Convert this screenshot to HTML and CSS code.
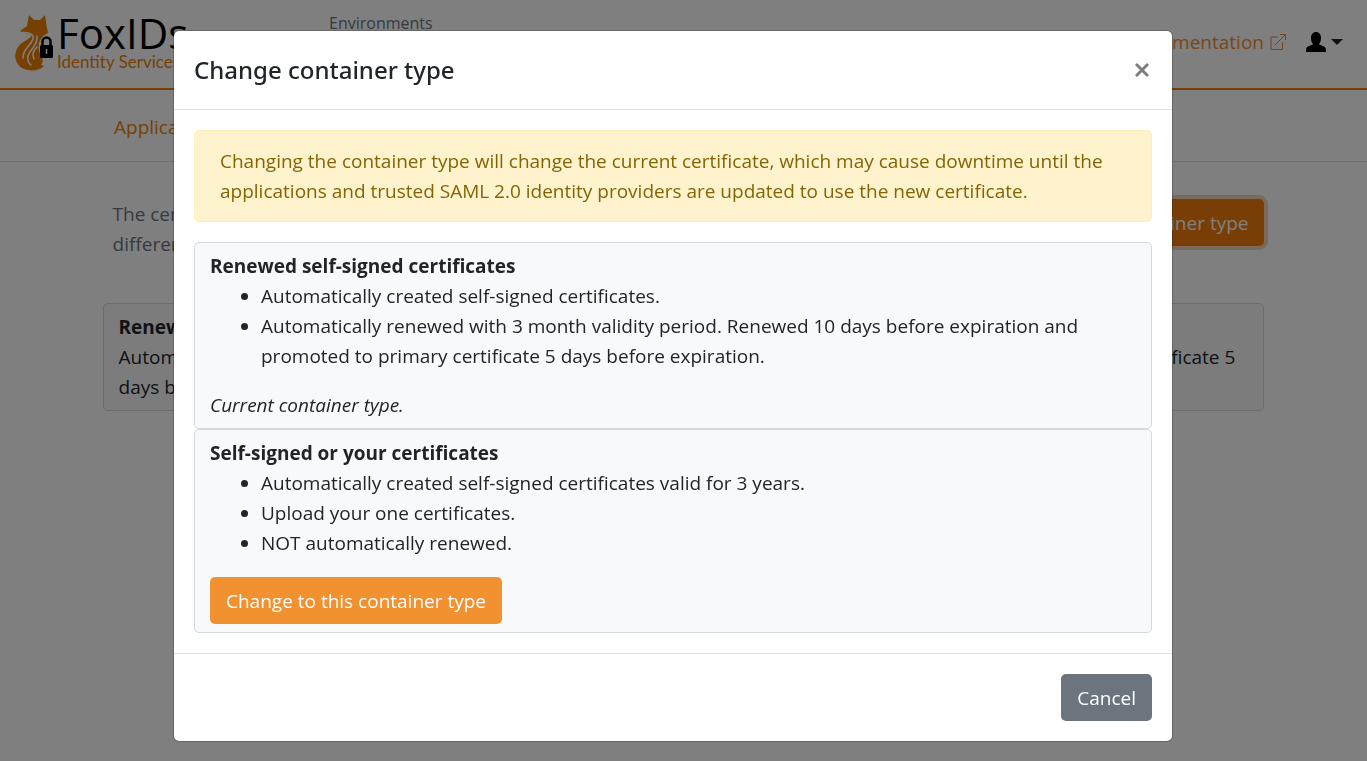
FILE: index.html
```html
<!DOCTYPE html>
<html lang="en">
<head>
<meta charset="utf-8">
<title>FoxIDs</title>
<link rel="stylesheet" href="styles.css">
</head>
<body>
<div class="page">
  <header class="topbar">
    <a class="brand" href="#">
      <svg class="brand-fox" viewBox="0 0 40 58" aria-hidden="true">
        <path fill="#f08100" d="M15 1 L20 6 H26 L31 1 C32 6 32 10 33 14 L34 19 L29 22 C25 26 24 31 25 37 C27 43 31 46 27 51 L30 52 C25 57 15 58 8 54 C1 49 -1 41 4 33 C8 27 15 26 18 21 C14 19 9 20 6 17 L13 12 Z"/>
        <path fill="none" stroke="#fff" stroke-width="1.500" stroke-linecap="round" d="M7 18.500 C15 18 20 20 19 25 C17 32 9 34 9 44 M23 22 C24 32 16 35 14 42 C13 46 15 50 17 51 M23 33 C19 37 18 41 20 45"/>
        <rect x="26" y="31" width="13" height="13" rx="1.500" fill="#000"/>
        <path fill="none" stroke="#000" stroke-width="2.500" d="M28.500 32 V27.500 a4 4 0 0 1 8 0 V32"/>
        <path stroke="#fff" stroke-width="1.500" d="M32.500 35 V40"/>
      </svg>
      <span class="brand-text">
        <span class="brand-name">FoxIDs</span>
        <span class="brand-sub">Identity Services</span>
      </span>
    </a>
    <div class="environments">Environments</div>
    <nav class="tools">
      <a class="doc-link" href="#">Documentation
        <svg class="external" viewBox="0 0 16 16" aria-hidden="true"><path fill="none" stroke="currentColor" d="M8 3 H1 V15.500 H12.500 V8 M5 11 L15.500 .5 M10 .5 H15.500 V6"/></svg>
      </a>
      <button class="user" type="button" aria-label="User menu">
        <svg class="user-icon" viewBox="0 0 20 20" aria-hidden="true"><path d="M10 0 C13 0 15 2.500 15 6 C15 9 14 11 13 12 C14 14 20 13 20 18 V20 H0 V18 C0 13 6 14 7 12 C6 11 5 9 5 6 C5 2.500 7 0 10 0 Z"/></svg>
        <span class="caret"></span>
      </button>
    </nav>
  </header>
  <nav class="subnav"><a href="#">Applications</a></nav>
  <main class="content">
    <div class="intro">
      <p>The certificates are used to sign tokens and metadata, the container type can be changed to a<br>different container type.</p>
      <button class="btn btn-focus" type="button">Change container type</button>
    </div>
    <section class="card">
      <h2>Renewed self-signed certificates</h2>
      <p>Automatically renewed with 3 month validity period. Renewed 10 days before expiration and promoted to primary certificate 5<br>days before expiration.</p>
    </section>
  </main>
</div>
<div class="backdrop">
  <div class="modal" role="dialog" aria-modal="true" aria-labelledby="dialog-title">
    <div class="modal-header">
      <h1 id="dialog-title">Change container type</h1>
      <button class="close" type="button" aria-label="Close"><svg viewBox="0 0 14 14" aria-hidden="true"><path d="M1 1 L13 13 M13 1 L1 13"/></svg></button>
    </div>
    <div class="modal-body">
      <div class="alert" role="alert">Changing the container type will change the current certificate, which may cause downtime until the applications and trusted SAML 2.0 identity providers are updated to use the new certificate.</div>
      <section class="card">
        <h2>Renewed self-signed certificates</h2>
        <ul>
          <li>Automatically created self-signed certificates.</li>
          <li>Automatically renewed with 3 month validity period. Renewed 10 days before expiration and promoted to primary certificate 5 days before expiration.</li>
        </ul>
        <p><em>Current container type.</em></p>
      </section>
      <section class="card">
        <h2>Self-signed or your certificates</h2>
        <ul>
          <li>Automatically created self-signed certificates valid for 3 years.</li>
          <li>Upload your one certificates.</li>
          <li>NOT automatically renewed.</li>
        </ul>
        <button class="btn" type="button">Change to this container type</button>
      </section>
    </div>
    <div class="modal-footer"><button class="btn btn-secondary" type="button">Cancel</button></div>
  </div>
</div>
</body>
</html>
```
FILE: styles.css
```css
* { box-sizing: border-box; }
body {
  margin: 0;
  font: 19px/30px "Segoe UI", "Open Sans", sans-serif;
  color: #212529;
  background: #fff;
}
h1, h2, p, ul { margin: 0; }
h2 { font-size: 19px; line-height: 30px; font-weight: 700; }
a { color: #f08f2e; text-decoration: none; }
button { font: inherit; cursor: pointer; }
.page { height: 100vh; overflow: hidden; }
.topbar {
  display: flex;
  height: 90px;
  padding: 0 24px 0 14px;
  border-bottom: 2px solid #f08100;
}
.brand { display: flex; width: 315px; padding-top: 14px; gap: 3px; }
.brand-fox { width: 40px; height: 58px; }
.brand-text { display: flex; flex-direction: column; }
.brand-name { font-size: 42px; line-height: 38px; color: #000; }
.brand-sub { font: 17px/20px Lato, sans-serif; color: #f08100; }
.environments { padding-top: 8px; font-size: 16px; color: #6c757d; }
.tools { display: flex; align-items: center; gap: 20px; margin-left: auto; padding-bottom: 5px; }
.doc-link { display: flex; align-items: center; gap: 6px; }
.external { width: 16px; height: 16px; }
.user { display: flex; align-items: center; gap: 5px; padding: 0; border: 0; background: none; }
.user-icon { width: 20px; height: 20px; }
.caret { border: 6px solid transparent; border-top-color: #212529; border-bottom: 0; }
.subnav { height: 72px; padding: 22px 114px; border-bottom: 1px solid #dee2e6; }
.subnav a { color: #f08100; }
.content { width: 85%; margin: 0 auto; padding-top: 37px; }
.intro { display: flex; justify-content: space-between; align-items: flex-start; margin-bottom: 44px; padding-left: 10px; color: #6c757d; }
.btn {
  height: 47px;
  padding: 0 16px;
  border: 0;
  border-radius: 5px;
  background: #f29130;
  color: #fff;
}
.btn-focus { background: #f07c0c; box-shadow: 0 0 0 4px #f5d5b8; }
.btn-secondary { background: #6c757d; }
.card { padding: 8px 15px; border: 1px solid #d5d8dc; border-radius: 5px; background: #f8f9fa; }
.card ul { padding-left: 51px; margin-bottom: 19px; }
.backdrop {
  position: fixed;
  inset: 0;
  padding: 30px 21px 20px 0;
  overflow: hidden;
  background: rgba(0, 0, 0, .5);
}
.modal {
  max-width: 1000px;
  margin: 0 auto;
  border: 1px solid rgba(0, 0, 0, .2);
  border-radius: 6px;
  background: #fff;
  background-clip: padding-box;
}
.modal-header { display: flex; justify-content: space-between; align-items: center; padding: 20px; border-bottom: 1px solid #dee2e6; }
.modal h1 { font: 500 24px/38px "Noto Sans", sans-serif; }
.close { display: flex; padding: 3px; border: 0; background: none; }
.close svg { width: 14px; height: 14px; fill: none; stroke: #7f7f7f; stroke-width: 3; }
.modal-body { padding: 20px; }
.alert { margin-bottom: 20px; padding: 15px 25px; border: 1px solid #ffeeba; border-radius: 5px; background: #fff3cd; color: #856404; }
.modal-footer { display: flex; justify-content: flex-end; padding: 20px; border-top: 1px solid #dee2e6; }
```
